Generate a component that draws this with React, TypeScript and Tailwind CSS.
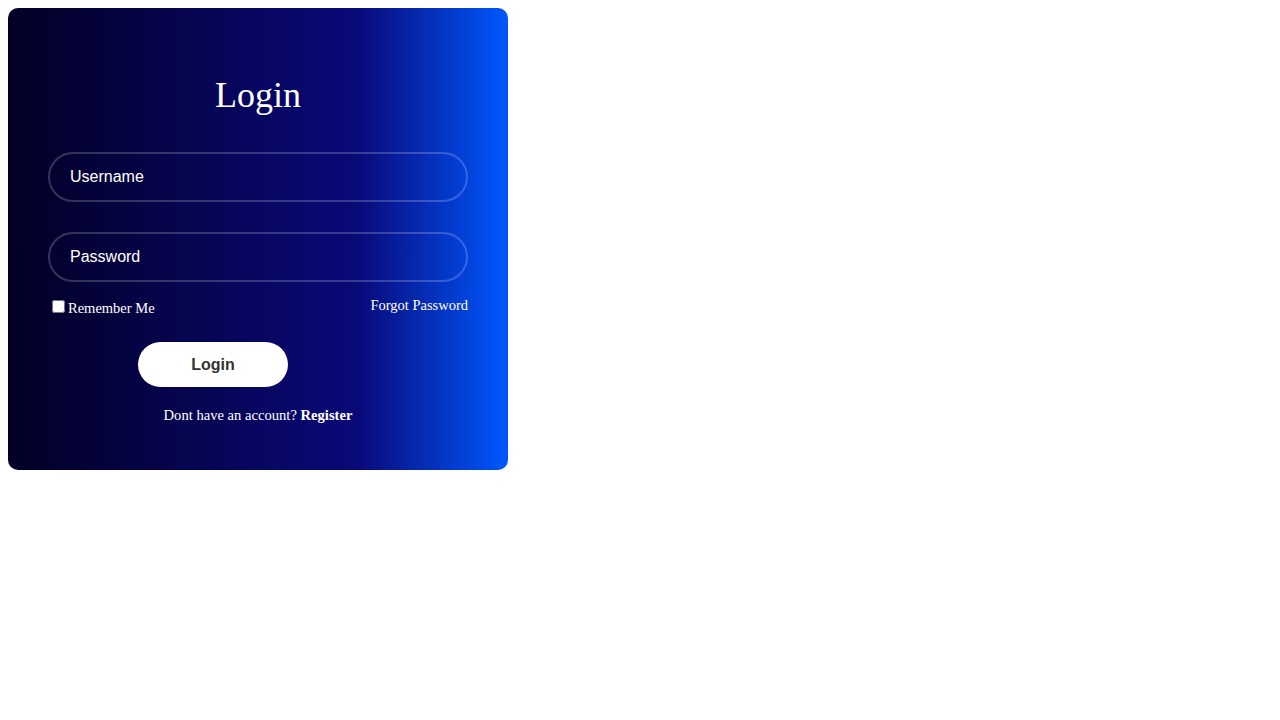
import { useState } from 'react';

export default function App() {
    const [username, setUsername] = useState('');
    const [password, setPassword] = useState('');

    return (
        <div className="min-h-screen bg-white font-['Liberation_Serif',serif]">
            <div className="m-2 w-[500px] h-[462px] rounded-[10px] px-10 pt-[67px] text-white bg-[linear-gradient(90deg,#020024_0%,#090979_70%,#0058ff_100%)]">
                {/* Title */}
                <h1 className="text-center text-[36px] leading-[40px] font-normal">Login</h1>

                <form className="mt-[37px]" onSubmit={e => e.preventDefault()}>
                    <input
                        type="text"
                        placeholder="Username"
                        value={username}
                        onChange={e => setUsername(e.target.value)}
                        className="block w-[420px] h-[50px] rounded-full border-2 border-white/20 bg-transparent pl-5 pr-5 font-['Liberation_Sans',sans-serif] text-[16px] text-white placeholder:text-white outline-none"
                    />
                    <input
                        type="password"
                        placeholder="Password"
                        value={password}
                        onChange={e => setPassword(e.target.value)}
                        className="mt-[30px] block w-[420px] h-[50px] rounded-full border-2 border-white/20 bg-transparent pl-5 pr-5 font-['Liberation_Sans',sans-serif] text-[16px] text-white placeholder:text-white outline-none"
                    />

                    <div className="mt-[15px] h-[20px] flex justify-between items-start text-[14.5px] leading-[normal]">
                        <label className="block">
                            <input type="checkbox" className="m-[3px_3px_3px_4px] align-baseline" />
                            Remember Me
                        </label>
                        <a href="#" className="text-white">Forgot Password</a>
                    </div>

                    <button
                        type="submit"
                        className="mt-[25px] ml-[90px] block w-[150px] h-[45px] rounded-full bg-white font-['Liberation_Sans',sans-serif] text-[16px] font-bold text-[#333]"
                    >
                        Login
                    </button>

                    <p className="mt-5 text-center text-[14.6px] leading-[normal]">
                        Dont have an account? <a href="#" className="font-bold text-white">Register</a>
                    </p>
                </form>
            </div>
        </div>
    );
}
